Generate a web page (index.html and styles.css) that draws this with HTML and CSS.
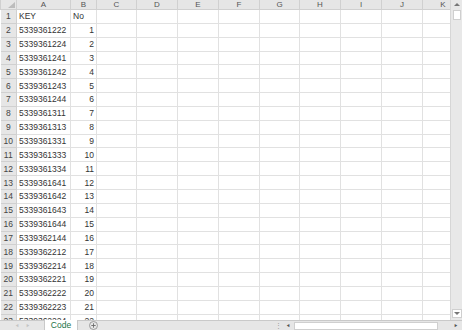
FILE: index.html
```html
<!DOCTYPE html>
<html lang="ja">
<head>
    <meta charset="UTF-8">
    <title>Code</title>
    <link rel="stylesheet" href="styles.css">
</head>
<body>
    <div class="book">
        <div class="sheet-area">
            <div class="grid-wrap">
                <table class="sheet">
                    <colgroup>
                        <col class="c-head">
                        <col class="c-a">
                        <col class="c-b">
                        <col class="c-c">
                        <col class="c-std">
                        <col class="c-std">
                        <col class="c-std">
                        <col class="c-g">
                        <col class="c-std">
                        <col class="c-std">
                        <col class="c-std">
                        <col class="c-std">
                    </colgroup>
                    <thead>
                        <tr>
                            <th class="corner"><span class="tri"></span></th>
                            <th>A</th><th>B</th><th>C</th><th>D</th><th>E</th><th>F</th><th>G</th><th>H</th><th>I</th><th>J</th><th>K</th>
                        </tr>
                    </thead>
                    <tbody id="rows"></tbody>
                </table>
            </div>
            <div class="vscroll">
                <div class="arrow up"><span></span></div>
                <div class="thumb"></div>
                <div class="track"></div>
                <div class="arrow down"><span></span></div>
            </div>
        </div>
        <div class="tabbar">
            <div class="nav">
                <span class="nav-arrow">&#9664;</span>
                <span class="nav-arrow">&#9654;</span>
            </div>
            <div class="tab">Code</div>
            <div class="add">
                <svg width="9" height="9" viewBox="0 0 9 9"><circle cx="4.5" cy="4.5" r="4" fill="none" stroke="#8a8a8a" stroke-width="0.8"/><path d="M4.5 2.3v4.4M2.3 4.5h4.4" stroke="#6a6a6a" stroke-width="0.9"/></svg>
            </div>
            <div class="spacer"></div>
            <div class="dots">&#8942;</div>
            <div class="hscroll">
                <div class="harrow">&#9664;</div>
                <div class="htrack"></div>
                <div class="harrow">&#9654;</div>
            </div>
        </div>
    </div>

    <script>
        const data = [
            ["KEY", "No"],
            ["5339361222", 1],
            ["5339361224", 2],
            ["5339361241", 3],
            ["5339361242", 4],
            ["5339361243", 5],
            ["5339361244", 6],
            ["5339361311", 7],
            ["5339361313", 8],
            ["5339361331", 9],
            ["5339361333", 10],
            ["5339361334", 11],
            ["5339361641", 12],
            ["5339361642", 13],
            ["5339361643", 14],
            ["5339361644", 15],
            ["5339362144", 16],
            ["5339362212", 17],
            ["5339362214", 18],
            ["5339362221", 19],
            ["5339362222", 20],
            ["5339362223", 21],
            ["5339362224", 22]
        ];

        // Build the rows: row header, A, B, then empty C..K
        const body = document.getElementById("rows");
        data.forEach((row, i) => {
            let tr = document.createElement("tr");
            let html = `<th>${i + 1}</th>`;
            html += `<td>${row[0]}</td>`;
            html += typeof row[1] === "number" ? `<td class="num">${row[1]}</td>` : `<td>${row[1]}</td>`;
            for (let j = 0; j < 9; j++) {
                html += "<td></td>";
            }
            tr.innerHTML = html;
            body.appendChild(tr);
        });
    </script>
</body>
</html>
```

FILE: styles.css
```css
body {
    margin: 0;
    font-family: "Liberation Sans", Arial, sans-serif;
    font-size: 8.5px;
    color: #333;
    background: #fff;
}

.book {
    width: 462px;
    height: 330px;
    display: flex;
    flex-direction: column;
    overflow: hidden;
}

.sheet-area {
    display: flex;
    height: 320px;
}

.grid-wrap {
    flex: 1;
    overflow: hidden;
}

.sheet {
    border-collapse: collapse;
    table-layout: fixed;
    width: 463px;
}

.c-head { width: 16px; }
.c-a { width: 54px; }
.c-b { width: 26px; }
.c-c { width: 40px; }
.c-g { width: 40px; }
.c-std { width: 41px; }

.sheet thead th {
    height: 9px;
    padding: 0;
    background: #e6e6e6;
    border: 1px solid #d0d0d0;
    border-top: none;
    color: #555;
    font-weight: normal;
    font-size: 8px;
    line-height: 9px;
}

.sheet thead th.corner {
    position: relative;
}

.tri {
    position: absolute;
    right: 1px;
    bottom: 1px;
    width: 0;
    height: 0;
    border-left: 7px solid transparent;
    border-bottom: 6px solid #bcbcbc;
}

.sheet tbody tr {
    height: 13.85px;
}

.sheet tbody th {
    padding: 0;
    background: #e6e6e6;
    border: 1px solid #d0d0d0;
    border-left: none;
    color: #444;
    font-weight: normal;
    text-align: center;
}

.sheet td {
    padding: 0 2px;
    border: 1px solid #e1e1e1;
    white-space: nowrap;
    overflow: hidden;
}

.sheet td.num {
    text-align: right;
}

/* vertical scrollbar */
.vscroll {
    width: 12px;
    background: #e8e8e8;
    border-left: 1px solid #d6d6d6;
    display: flex;
    flex-direction: column;
    align-items: center;
    box-sizing: border-box;
    padding-bottom: 2px;
}

.arrow {
    width: 10px;
    height: 9px;
    display: flex;
    align-items: center;
    justify-content: center;
}

.arrow span {
    width: 0;
    height: 0;
    border-left: 3px solid transparent;
    border-right: 3px solid transparent;
}

.arrow.up span {
    border-bottom: 3px solid #777;
}

.arrow.down {
    background: #fff;
    border: 1px solid #cfcfcf;
    box-sizing: border-box;
}

.arrow.down span {
    border-top: 3px solid #777;
}

.thumb {
    width: 8px;
    height: 10px;
    background: #fff;
    border: 1px solid #cfcfcf;
    box-sizing: border-box;
    margin-top: 1px;
}

.track {
    flex: 1;
}

/* sheet tabs */
.tabbar {
    height: 10px;
    display: flex;
    align-items: stretch;
    background: #e6e6e6;
    border-top: 1px solid #c9c9c9;
    box-sizing: border-box;
}

.nav {
    width: 44px;
    display: flex;
    justify-content: center;
    gap: 7px;
    align-items: center;
    color: #c4c4c4;
    font-size: 4px;
    line-height: 4px;
}

.tab {
    width: 34px;
    background: #fff;
    color: #217346;
    font-size: 8.5px;
    line-height: 10px;
    text-align: center;
    border-left: 1px solid #c9c9c9;
    border-right: 1px solid #c9c9c9;
    margin-top: -1px;
    box-sizing: border-box;
}

.add {
    width: 30px;
    display: flex;
    justify-content: center;
    align-items: center;
}

.spacer {
    flex: 1;
}

.dots {
    width: 8px;
    color: #999;
    font-size: 7px;
    line-height: 9px;
    text-align: center;
}

.hscroll {
    width: 176px;
    display: flex;
    align-items: center;
    gap: 2px;
    padding: 0 2px;
}

.harrow {
    width: 8px;
    color: #555;
    font-size: 4px;
    line-height: 4px;
    text-align: center;
}

.htrack {
    flex: 1;
    height: 8px;
    background: #fff;
    border: 1px solid #cfcfcf;
    box-sizing: border-box;
    margin-right: 12px;
}
```
